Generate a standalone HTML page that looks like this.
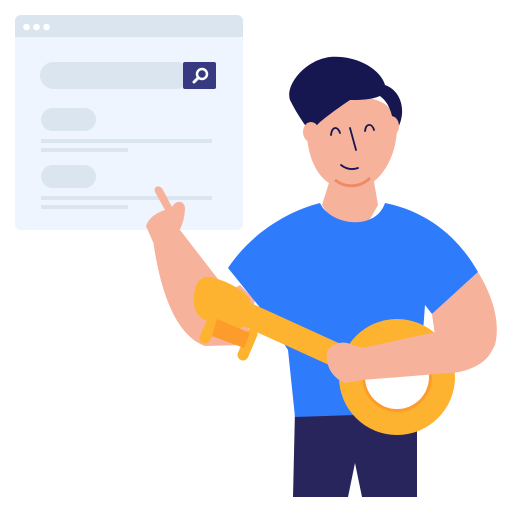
<!DOCTYPE html><html><head><style>body{margin:0;background:#fff}svg{display:block}</style></head><body>
<svg width="512" height="512" viewBox="0 0 512 512">
<rect x="15" y="15" width="228" height="215" rx="6" fill="#eef5fe"/>
<path d="M21 15h216a6 6 0 0 1 6 6v16H15V21a6 6 0 0 1 6-6z" fill="#dae5f0"/>
<circle cx="26.5" cy="27" r="3.3" fill="#fff"/><circle cx="36.5" cy="27" r="3.3" fill="#fff"/><circle cx="46.5" cy="27" r="3.3" fill="#fff"/>
<rect x="40" y="62" width="150" height="27" rx="13.5" fill="#dae5f0"/>
<rect x="183" y="62" width="33" height="27" rx="2" fill="#373a80"/>
<circle cx="202" cy="74" r="5" fill="none" stroke="#fff" stroke-width="2.5"/><path d="M198 78l-4 4" stroke="#fff" stroke-width="3" stroke-linecap="round"/>
<rect x="41" y="108" width="55" height="23" rx="11.5" fill="#dae5f0"/>
<rect x="41" y="165" width="55" height="23" rx="11.5" fill="#dae5f0"/>
<rect x="41" y="139" width="171" height="4" fill="#dae5f0"/><rect x="41" y="148" width="87" height="4" fill="#dae5f0"/>
<rect x="41" y="196" width="171" height="4" fill="#dae5f0"/><rect x="41" y="205" width="87" height="4" fill="#dae5f0"/>
<path d="M295 410L417 410L417 497L362 497L355 463L348 497L293 497Z" fill="#28245c"/>
<path d="M153 240C160 290 175 335 205 346L245 345L255 300L240 285L228 292L180 230Z" fill="#f7b29b"/>
<path d="M146 226C150 215 160 212 165 210L155 192C153 186 160 184 163 190L172 207C176 200 183 200 185 207C185 220 180 232 176 234C170 238 160 242 153 242Z" fill="#f7b29b"/>
<path d="M333 170L372 170L378 205L365 228L335 225L322 205Z" fill="#f7b29b"/>
<path d="M320 203C330 225 375 232 385 203C430 212 460 240 478 272L432 314L425 305L417 413L295 417L288 350L262 310L228 268C250 235 285 212 320 203Z" fill="#2e7bfb"/>
<path d="M432 314L478 272C495 300 500 325 495 345C488 360 470 368 450 370L362 378L350 350L435 335Z" fill="#f7b29b"/>
<circle cx="397" cy="377" r="58" fill="#fdb32f"/>
<circle cx="397" cy="377" r="35" fill="#fd9c2b"/>
<circle cx="397" cy="377" r="32" fill="#fff"/>
<path d="M215 300L358 365" stroke="#fdb32f" stroke-width="24" stroke-linecap="round"/>
<path d="M210 277C225 280 245 290 250 300C254 315 245 332 232 330L205 320C195 315 193 305 194 296C195 283 200 276 210 277Z" fill="#fdb32f"/>
<path d="M214 318L205 338M252 334L243 355" stroke="#fdb32f" stroke-width="11" stroke-linecap="round"/>
<path d="M217 319L250 333L244 348L212 336Z" fill="#fd9c2b"/>
<path d="M362 348L445 330C465 326 490 330 494 345C490 362 470 372 450 373L362 380Z" fill="#f7b29b"/>
<path d="M352 345C345 340 330 343 327 352C325 365 332 378 345 383L363 380L363 348Z" fill="#f7b29b"/>
<path d="M306 120C306 165 322 188 350 190C375 190 395 165 397 130C397 110 385 95 350 98C320 100 306 108 306 120Z" fill="#f7b29b"/>
<path d="M335 180C345 188 360 188 370 178" stroke="#ef8a68" stroke-width="3" fill="none"/>
<path d="M290 100C285 85 305 60 330 57C355 55 380 68 385 85C400 90 408 110 397 130L393 120C390 105 385 100 380 96C370 100 360 100 350 100C335 110 325 118 320 122L312 130L305 125C300 118 295 110 290 100Z" fill="#161650"/>
<ellipse cx="311" cy="132" rx="8" ry="10" fill="#f7b29b"/><ellipse cx="391" cy="126" rx="8" ry="10" fill="#f7b29b"/>
<g stroke="#161650" stroke-width="1.8" fill="none" stroke-linecap="round">
<path d="M331 135C332 126 338 126 340 133"/><path d="M365 131C366 123 372 123 374 130"/>
<path d="M350 128L356 150"/><path d="M341 165C346 169 352 170 358 168"/></g>
</svg>
</body></html>
